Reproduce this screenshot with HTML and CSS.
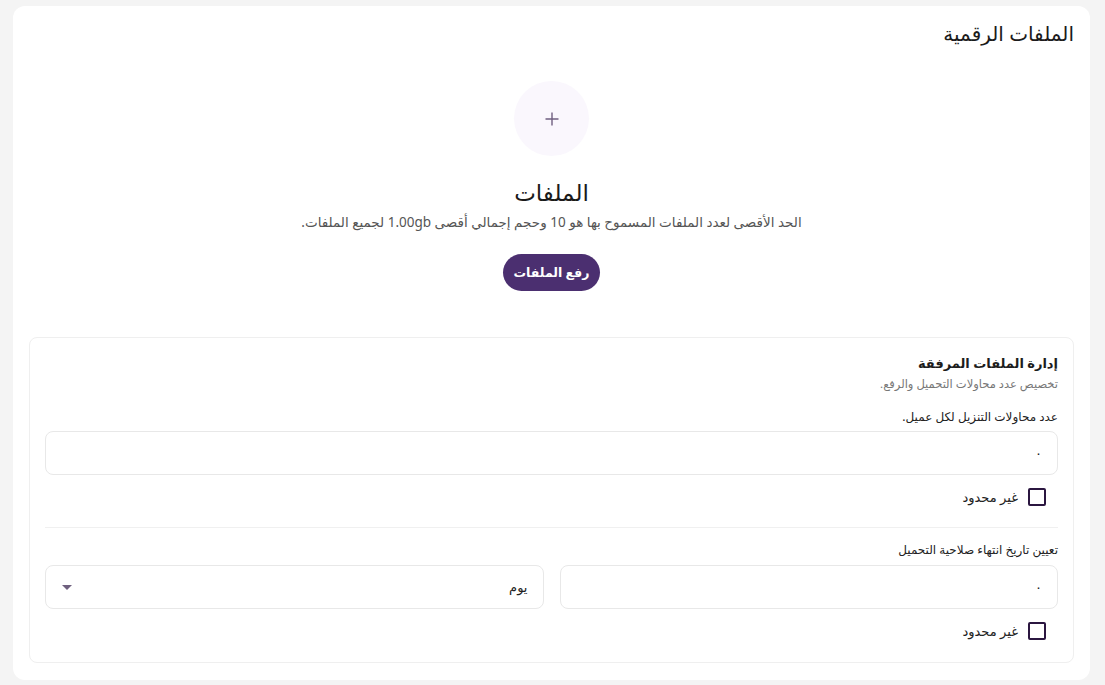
FILE: index.html
```html
<!DOCTYPE html>
<html lang="ar" dir="rtl">
<head>
<meta charset="utf-8">
<title>الملفات الرقمية</title>
<link rel="stylesheet" href="styles.css">
</head>
<body>
<main class="card">
  <h1 class="card-title">الملفات الرقمية</h1>
  <section class="upload">
    <div class="upload-circle">
      <svg width="16" height="16" viewBox="0 0 16 16"><path d="M8 1.5v13M1.5 8h13" stroke="#6f5f80" stroke-width="1.4" fill="none"/></svg>
    </div>
    <h2 class="upload-title">الملفات</h2>
    <p class="upload-desc">الحد الأقصى لعدد الملفات المسموح بها هو 10 وحجم إجمالي أقصى 1.00gb لجميع الملفات.</p>
    <button class="btn-primary">رفع الملفات</button>
  </section>
  <section class="panel">
    <h3 class="panel-title">إدارة الملفات المرفقة</h3>
    <p class="panel-sub">تخصيص عدد محاولات التحميل والرفع.</p>
    <div class="field">
      <label class="field-label">عدد محاولات التنزيل لكل عميل.</label>
      <div class="input">٠</div>
      <label class="check"><span class="box"></span><span>غير محدود</span></label>
    </div>
    <hr class="divider">
    <div class="field field-2">
      <label class="field-label">تعيين تاريخ انتهاء صلاحية التحميل</label>
      <div class="row">
        <div class="input">٠</div>
        <div class="input select"><span>يوم</span><span class="caret"></span></div>
      </div>
      <label class="check"><span class="box"></span><span>غير محدود</span></label>
    </div>
  </section>
</main>
</body>
</html>
```

FILE: styles.css
```css
* { box-sizing: border-box; }
html, body { margin: 0; padding: 0; }
body {
  background: #f4f4f4;
  font-family: "Noto Sans", "DejaVu Sans", sans-serif;
  color: #1f1f1f;
  padding: 6px 15px 5px 13px;
}
.card {
  background: #fff;
  border-radius: 12px;
  padding: 15px 16px 17px;
  height: 674px;
}
.card-title {
  margin: 0;
  font-size: 20px;
  font-weight: 400;
  line-height: 26px;
  color: #1b1b1b;
}
.upload {
  display: flex;
  flex-direction: column;
  align-items: center;
  padding-top: 34px;
}
.upload-circle {
  width: 75px;
  height: 75px;
  border-radius: 50%;
  background: #faf7fd;
  display: flex;
  align-items: center;
  justify-content: center;
}
.upload-title {
  margin: 21px 0 0;
  font-size: 23px;
  font-weight: 400;
  line-height: 30px;
  color: #1a1a1a;
}
.upload-desc {
  margin: 6px 0 0;
  font-size: 13.5px;
  line-height: 18px;
  color: #555;
}
.btn-primary {
  margin-top: 23px;
  height: 37px;
  padding: 0 11px;
  border: none;
  border-radius: 19px;
  background: #4b2f70;
  color: #fff;
  font-family: inherit;
  font-size: 12.5px;
  font-weight: 600;
}
.panel {
  margin-top: 46px;
  border: 1px solid #efefef;
  border-radius: 8px;
  padding: 16px 15px 22px;
}
.panel-title {
  margin: 0;
  font-size: 13px;
  font-weight: 700;
  line-height: 18px;
  color: #1d1d1d;
}
.panel-sub {
  margin: 4px 0 0;
  font-size: 11.5px;
  line-height: 16px;
  color: #777;
}
.field { margin-top: 17px; }
.field-2 { margin-top: 14px; }
.field-label {
  display: block;
  font-size: 12px;
  line-height: 16px;
  color: #222;
  margin-bottom: 6px;
}
.field-2 .field-label { margin-bottom: 7px; }
.input {
  height: 44px;
  border: 1px solid #e8e8e8;
  border-radius: 8px;
  padding: 0 15px;
  display: flex;
  align-items: center;
  font-size: 13px;
  color: #222;
}
.row {
  display: flex;
  gap: 16px;
}
.row .input { flex: 1; }
.select { justify-content: space-between; font-weight: 400; }
.caret {
  width: 0;
  height: 0;
  border-left: 5px solid transparent;
  border-right: 5px solid transparent;
  border-top: 5px solid #6f607f;
  margin-left: 1px;
}
.check {
  display: flex;
  align-items: center;
  gap: 10px;
  margin-top: 13px;
  padding-right: 12px;
  font-size: 13px;
  line-height: 18px;
  color: #222;
}
.box {
  width: 18px;
  height: 18px;
  border: 2px solid #2b1640;
  border-radius: 2px;
}
.divider {
  border: none;
  border-top: 1px solid #f0f0f0;
  margin: 21px 0 0;
}
```
